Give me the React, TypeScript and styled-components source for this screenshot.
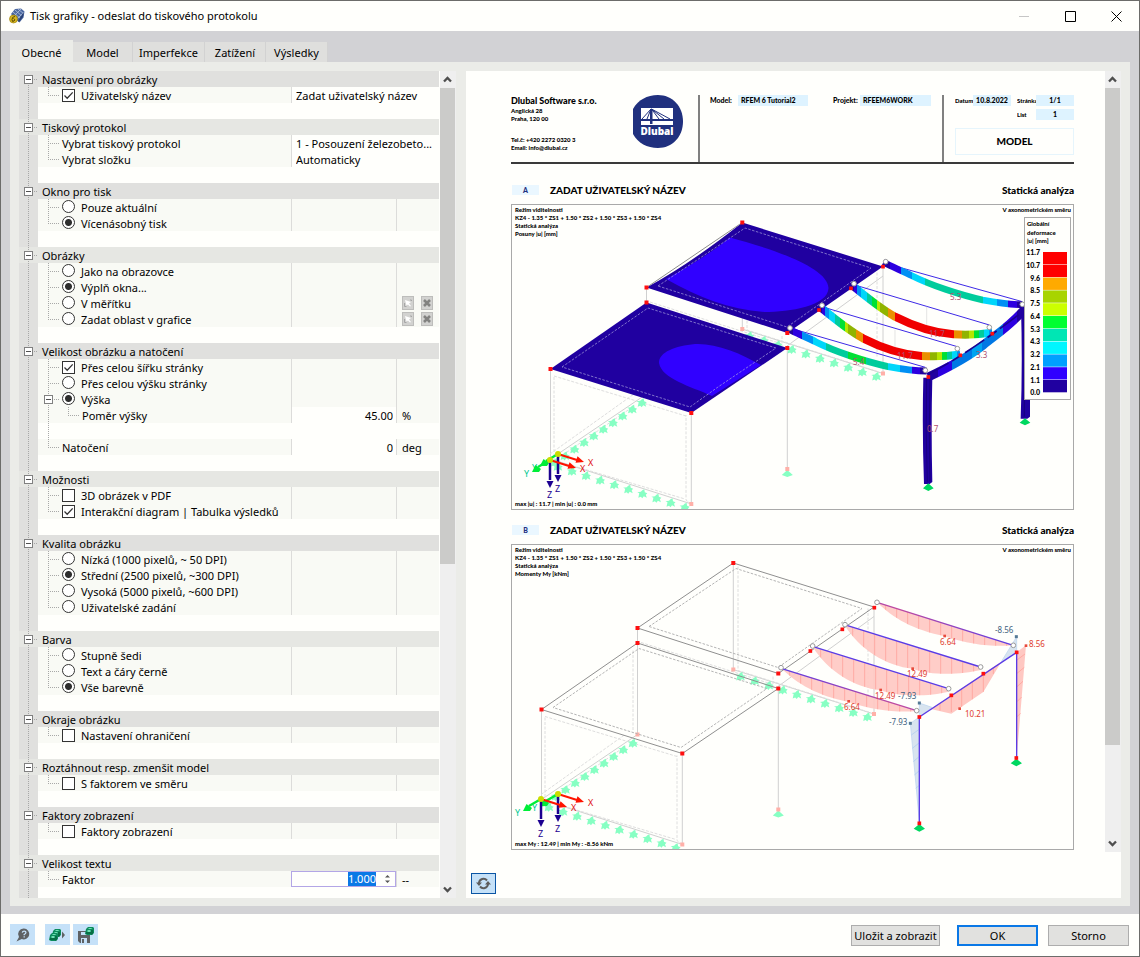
import React, { useEffect, useRef } from "react";
import styled, { createGlobalStyle, css } from "styled-components";

const UI_FONT = '"Noto Sans", "Open Sans", sans-serif';
const PRINT_FONT = '"Lato", "Open Sans", sans-serif';
const PAPER = "#fffffc";

const GlobalStyle = createGlobalStyle`
  *, *::before, *::after { box-sizing: border-box; }
  body { margin: 0; background: ${PAPER}; color: #000; font: 11px/16px ${UI_FONT}; }
  button, input, select { font: inherit; color: inherit; }
`;

/* ---------- window frame ---------- */

const Dialog = styled.div`
  display: flex;
  flex-direction: column;
  height: 100vh;
  border: 1px solid #6c6c6a;
  background: ${PAPER};
`;

const TitleBar = styled.header`
  display: flex;
  align-items: center;
  gap: 5px;
  flex: 0 0 30px;
  padding-left: 8px;
  h1 { flex: 1; margin: 0; font-size: 11px; font-weight: 400; line-height: 16px; }
`;

const CaptionButtons = styled.div`
  display: flex;
`;

const CaptionButton = styled.button`
  display: grid;
  place-items: center;
  width: 46px;
  height: 30px;
  padding: 0;
  border: 0;
  background: none;
`;

const Body = styled.main`
  display: flex;
  flex-direction: column;
  flex: 1;
  min-height: 0;
  padding: 9px 9px 8px;
  background: #d2d2d5;
`;

const Tabs = styled.nav`
  display: flex;
  align-items: flex-end;
  height: 22px;
`;

const Tab = styled.button<{ $width: number; $active?: boolean }>`
  width: ${(p) => p.$width}px;
  height: ${(p) => (p.$active ? 22 : 20)}px;
  padding: ${(p) => (p.$active ? 4 : 2)}px 0 0;
  border: 0;
  border-right: ${(p) => (p.$active ? "0" : "1px solid #d2d2d2")};
  background: ${(p) => (p.$active ? "#ebece8" : "#dfdfdd")};
  line-height: 18px;
  white-space: nowrap;
`;

const TabPage = styled.section`
  display: flex;
  gap: 10px;
  flex: 1;
  min-height: 0;
  padding: 9px 9px 8px;
  background: #ebece8;
`;

const Footer = styled.footer`
  display: flex;
  align-items: flex-start;
  flex: 0 0 42px;
  padding: 10px 10px 0 9px;
`;

const ToolButton = styled.button<{ $outlined?: boolean; $spaced?: boolean }>`
  display: grid;
  place-items: center;
  width: 25px;
  height: 21px;
  margin-right: ${(p) => (p.$spaced ? 10 : 3)}px;
  padding: 0;
  border: ${(p) => (p.$outlined ? "1px solid #0a55a4" : "0")};
  background: #c5e1f8;
`;

const PushButtons = styled.div`
  display: flex;
  gap: 10px;
  margin: 1px 0 0 auto;
`;

const PushButton = styled.button<{ $primary?: boolean; $wide?: boolean }>`
  width: ${(p) => (p.$wide ? 89 : 81)}px;
  height: 21px;
  margin-right: ${(p) => (p.$wide ? 7 : 0)}px;
  padding: 0;
  border: ${(p) => (p.$primary ? "2px solid #0a78e6" : "1px solid #adadad")};
  background: #e1e1df;
  line-height: 17px;
  white-space: nowrap;
`;

/* ---------- scroll bar ---------- */

const ScrollTrack = styled.div`
  display: flex;
  flex-direction: column;
  flex: 0 0 16px;
  background: #efefef;
`;

const ScrollArrow = styled.button`
  display: grid;
  place-items: center;
  flex: 0 0 17px;
  width: 15px;
  padding: 0;
  border: 0;
  background: none;
`;

const ScrollLane = styled.div`
  flex: 1;
  min-height: 0;
`;

const ScrollThumb = styled.div<{ $share: number }>`
  width: 15px;
  height: ${(p) => p.$share}%;
  background: #cbcbc9;
`;

function ScrollBar({ share }: { share: number }) {
  return (
    <ScrollTrack>
      <ScrollArrow aria-label="Nahoru">
        <svg width="9" height="7" viewBox="0 0 9 7"><path d="M1 5.500 4.500 2 8 5.500" fill="none" stroke="#4e4e4e" strokeWidth="2.300" /></svg>
      </ScrollArrow>
      <ScrollLane><ScrollThumb $share={share} /></ScrollLane>
      <ScrollArrow aria-label="Dolů">
        <svg width="9" height="7" viewBox="0 0 9 7"><path d="M1 1.500 4.500 5 8 1.500" fill="none" stroke="#4e4e4e" strokeWidth="2.300" /></svg>
      </ScrollArrow>
    </ScrollTrack>
  );
}

/* ---------- property tree ---------- */

const dotsX = "repeating-linear-gradient(to right, #a8a8a8 0 1px, transparent 1px 2px)";
const dotsY = "repeating-linear-gradient(to bottom, #a8a8a8 0 1px, transparent 1px 2px)";

const TreePanel = styled.div`
  display: flex;
  gap: 1px;
  flex: 0 0 437px;
  background: ${PAPER};
`;

const TreeList = styled.div`
  flex: 1;
  overflow: hidden;
`;

const Row = styled.div`
  display: flex;
  height: 16px;
  white-space: nowrap;
`;

const Gutter = styled.div<{ $start?: boolean }>`
  flex: 0 0 19px;
  padding: 4px 0 0 5px;
  background: ${dotsY} 9px ${(p) => (p.$start ? "12px" : "0")} / 1px 16px no-repeat, #e0e0de;
`;

const GroupRow = styled(Row)<{ $light: boolean }>`
  background: ${(p) => (p.$light ? "#e6e7e3" : "#e0e0de")};
  ${Gutter} {
    background:
      ${dotsY} 9px 0 / 1px 16px no-repeat,
      ${dotsX} 15px 8px / 4px 1px no-repeat;
  }
  &:first-child ${Gutter} {
    background:
      ${dotsY} 9px 12px / 1px 16px no-repeat,
      ${dotsX} 15px 8px / 4px 1px no-repeat;
  }
  h2 {
    margin: 0;
    padding-left: 4px;
    font: inherit;
    line-height: 18px;
  }
`;

const Expander = styled.button`
  display: block;
  width: 9px;
  height: 9px;
  padding: 0;
  border: 1px solid #808080;
  background: linear-gradient(#505050, #505050) 1px 3px / 5px 1px no-repeat, #fff;
`;

const LabelCell = styled.div`
  display: flex;
  flex: 1;
  background: #f9faf5;
`;

const Branch = styled.span<{ $last?: boolean; $nested?: boolean }>`
  flex: 0 0 24px;
  padding: 4px 0 0 6px;
  background:
    ${dotsX} 10px 8px / 11px 1px no-repeat,
    ${dotsY} 10px 0 / 1px ${(p) => (p.$last ? 8 : 16)}px no-repeat;
`;

const Trunk = styled.span`
  flex: 0 0 20px;
  background: ${dotsY} 10px 0 / 1px 16px no-repeat;
`;

const Caption = styled.span`
  line-height: 18px;
`;

const ChoiceLabel = styled.label`
  display: flex;
  align-items: flex-start;
  gap: 6px;
  line-height: 18px;
`;

const markBase = css`
  appearance: none;
  flex: none;
  width: 13px;
  height: 13px;
  border: 1px solid #333;
  background: #fff;
`;

const Tick = styled.input.attrs({ type: "checkbox" })`
  ${markBase}
  margin: 2px 0 0;
  &:checked {
    background-image: url("data:image/svg+xml,%3Csvg xmlns='http://www.w3.org/2000/svg' viewBox='0 0 11 11'%3E%3Cpath d='M1.5 5.5 4.2 8.2 9.7 2.4' fill='none' stroke='%23333' stroke-width='1.3'/%3E%3C/svg%3E");
  }
`;

const Radio = styled.input.attrs({ type: "radio" })`
  ${markBase}
  margin: 1px 0 0;
  border-radius: 50%;
  &:checked { background-image: radial-gradient(circle, #2e2e2e 3px, transparent 4px); }
`;

const ValueCell = styled.div<{ $wide?: boolean; $white?: boolean }>`
  flex: 0 0 ${(p) => (p.$wide ? 148 : 105)}px;
  border-left: 1px solid #dcdcda;
  background: ${(p) => (p.$white ? PAPER : "#f9faf5")};
`;

const UnitCell = styled.div`
  display: flex;
  gap: 7px;
  flex: 0 0 43px;
  padding-left: 5px;
  border-left: 1px solid #dcdcda;
  background: #f9faf5;
  line-height: 18px;
`;

const Field = styled.input<{ $number?: boolean }>`
  display: block;
  width: 100%;
  height: 16px;
  padding: ${(p) => (p.$number ? "2px 3px 0 0" : "2px 0 0 4px")};
  border: 0;
  background: none;
  text-align: ${(p) => (p.$number ? "right" : "left")};
`;

const Picker = styled.select`
  display: block;
  appearance: none;
  width: 100%;
  height: 16px;
  padding: 1px 0 0 4px;
  border: 0;
  background: none;
`;

const SpinCell = styled.div`
  display: flex;
  flex: 0 0 105px;
  min-width: 0;
  height: 16px;
  border: 1px solid #b3a6e6;
  background: ${PAPER};
  input {
    flex: 1;
    width: 0;
    height: 14px;
    padding: 0 4px 0 0;
    border: 0;
    outline: 0;
    background: none;
    line-height: 14px;
    text-align: right;
  }
  input::selection { background: #0a78e6; color: #fff; }
`;

const SpinButton = styled.button`
  display: grid;
  place-items: center;
  width: 15px;
  padding: 0;
  border: 0;
  background: none;
`;

const MiniButton = styled.button`
  display: grid;
  place-items: center;
  width: 12px;
  height: 14px;
  margin-top: 1px;
  padding: 0;
  border: 1px solid #bdbdbb;
  background: #d2d2d0;
`;

type Item = {
  text?: string;
  kind?: "check" | "radio" | "plain" | "blank";
  on?: boolean;
  value?: string;
  unit?: string;
  control?: "text" | "select" | "number" | "spin";
  tools?: boolean;
  expandable?: boolean;
  nested?: boolean;
  trunk?: boolean;
};

const blank: Item = { kind: "blank" };

const groups: { title: string; items: Item[] }[] = [
  { title: "Nastavení pro obrázky", items: [
    { text: "Uživatelský název", kind: "check", on: true, value: "Zadat uživatelský název", control: "text" }, blank] },
  { title: "Tiskový protokol", items: [
    { text: "Vybrat tiskový protokol", kind: "plain", value: "1 - Posouzení železobeto...", control: "select" },
    { text: "Vybrat složku", kind: "plain", value: "Automaticky", control: "select" }, blank] },
  { title: "Okno pro tisk", items: [
    { text: "Pouze aktuální", kind: "radio" }, { text: "Vícenásobný tisk", kind: "radio", on: true }, blank] },
  { title: "Obrázky", items: [
    { text: "Jako na obrazovce", kind: "radio" }, { text: "Výplň okna...", kind: "radio", on: true },
    { text: "V měřítku", kind: "radio", tools: true }, { text: "Zadat oblast v grafice", kind: "radio", tools: true }, blank] },
  { title: "Velikost obrázku a natočení", items: [
    { text: "Přes celou šířku stránky", kind: "check", on: true }, { text: "Přes celou výšku stránky", kind: "radio" },
    { text: "Výška", kind: "radio", on: true, expandable: true },
    { text: "Poměr výšky", kind: "plain", nested: true, value: "45.00", unit: "%", control: "number" },
    { kind: "blank", trunk: true },
    { text: "Natočení", kind: "plain", value: "0", unit: "deg", control: "number" }, blank] },
  { title: "Možnosti", items: [
    { text: "3D obrázek v PDF", kind: "check" }, { text: "Interakční diagram | Tabulka výsledků", kind: "check", on: true }, blank] },
  { title: "Kvalita obrázku", items: [
    { text: "Nízká (1000 pixelů, ~ 50 DPI)", kind: "radio" }, { text: "Střední (2500 pixelů, ~300 DPI)", kind: "radio", on: true },
    { text: "Vysoká (5000 pixelů, ~600 DPI)", kind: "radio" }, { text: "Uživatelské zadání", kind: "radio" }, blank] },
  { title: "Barva", items: [
    { text: "Stupně šedi", kind: "radio" }, { text: "Text a čáry černě", kind: "radio" }, { text: "Vše barevně", kind: "radio", on: true }, blank] },
  { title: "Okraje obrázku", items: [{ text: "Nastavení ohraničení", kind: "check" }, blank] },
  { title: "Roztáhnout resp. zmenšit model", items: [{ text: "S faktorem ve směru", kind: "check" }, blank] },
  { title: "Faktory zobrazení", items: [{ text: "Faktory zobrazení", kind: "check" }, blank] },
  { title: "Velikost textu", items: [{ text: "Faktor", kind: "plain", value: "1.000", unit: "--", control: "spin" }, blank] },
];

function SpinField({ label, value }: { label: string; value: string }) {
  const ref = useRef<HTMLInputElement>(null);
  useEffect(() => {
    ref.current?.focus({ preventScroll: true });
    ref.current?.select();
  }, []);
  return (
    <SpinCell>
      <input ref={ref} aria-label={label} defaultValue={value} />
      <SpinButton aria-label="Změnit hodnotu">
        <svg width="7" height="10" viewBox="0 0 7 10"><path d="M1 3.500h5L3.500 1zM1 6.500h5L3.500 9z" fill="#555" /></svg>
      </SpinButton>
    </SpinCell>
  );
}

function Value({ item }: { item: Item }) {
  const { control, text = "", value = "" } = item;
  if (control === "text") return <ValueCell $wide $white><Field aria-label={text} defaultValue={value} /></ValueCell>;
  if (control === "select")
    return <ValueCell $wide $white><Picker aria-label={text}><option>{value}</option></Picker></ValueCell>;
  return (
    <>
      {control === "spin" ? <SpinField label={text} value={value} />
        : <ValueCell $white={!!control}>{control && <Field $number aria-label={text} defaultValue={value} />}</ValueCell>}
      <UnitCell>
        {item.unit}
        {item.tools && (
          <>
            <MiniButton disabled aria-label="Vybrat v grafice">
              <svg width="10" height="10" viewBox="0 0 10 10"><path d="M2 2 8 4 6 5.500 8 8 7 8.500 5 6.500 3.500 7.500z" fill="#fff" /><path d="M1.500 5v3.500h2M7 2h1.500v1" fill="none" stroke="#a6a6a6" /></svg>
            </MiniButton>
            <MiniButton disabled aria-label="Odstranit">
              <svg width="8" height="8" viewBox="0 0 8 8"><path d="m1 1 6 6M7 1 1 7" stroke="#828280" strokeWidth="2.600" /></svg>
            </MiniButton>
          </>
        )}
      </UnitCell>
    </>
  );
}

function TreeItem({ item, group, last }: { item: Item; group: string; last: boolean }) {
  if (item.kind === "blank") return <Row><Gutter />{item.trunk && <Trunk />}</Row>;
  return (
    <Row>
      <Gutter />
      <LabelCell>
        {item.nested && <Trunk />}
        <Branch $last={last || item.nested}>{item.expandable && <Expander aria-label={"Sbalit " + item.text} />}</Branch>
        {item.kind === "plain" ? <Caption>{item.text}</Caption> : (
          <ChoiceLabel>
            {item.kind === "check" ? <Tick defaultChecked={item.on} /> : <Radio name={group} defaultChecked={item.on} />}
            {item.text}
          </ChoiceLabel>
        )}
      </LabelCell>
      <Value item={item} />
    </Row>
  );
}

/* ---------- print preview ---------- */

const PreviewPanel = styled.div`
  display: flex;
  flex-direction: column;
  flex: 1;
  min-width: 0;
  background: ${PAPER};
`;

const PreviewScroll = styled.div`
  display: flex;
  flex: 1;
  min-height: 0;
`;

const Sheet = styled.article`
  flex: 1;
  min-width: 0;
  overflow: hidden;
  padding: 24px 31px 0 45px;
  font: 900 6px/8px ${PRINT_FONT};
`;

const PreviewTools = styled.div`
  flex: 0 0 46px;
  padding: 21px 5px 0;
`;

const SheetHead = styled.header`
  display: grid;
  grid-template: 67px / 187px 1fr 132px;
  height: 69px;
  margin-bottom: 19px;
  border-bottom: 2px solid #3a3a3a;
`;

const Company = styled.address`
  display: flex;
  justify-content: space-between;
  padding-right: 14px;
  font-style: normal;
  strong { display: block; font-size: 9px; font-weight: 900; line-height: 12px; }
  p { margin: 0 0 13px; }
  p:last-child { margin: 0; }
`;

const HeadPairs = styled.dl`
  display: grid;
  grid-template-columns: 28px 70px 25px 27px 71px;
  align-content: start;
  margin: 0;
  padding-left: 10px;
  border-left: 2px solid #808080;
  font-size: 7px;
  line-height: 11px;
  dd { margin: 0; padding-left: 3px; background: #def3ff; white-space: nowrap; }
  dd + dt { grid-column: 4; }
`;

const HeadDates = styled.div`
  padding-left: 11px;
  border-left: 2px solid #808080;
  line-height: 11px;
  dl {
    display: grid;
    grid-template-columns: 18px 38px 6px 19px 38px;
    row-gap: 3px;
    margin: 0 0 8px;
  }
  dt { overflow: hidden; white-space: nowrap; }
  dd { margin: 0; background: #def3ff; font-size: 7px; text-align: center; }
  .second { grid-column: 4; }
  p { margin: 0; border: 1px solid #e6f5fc; font-size: 10px; line-height: 25px; text-align: center; }
`;

const FigureHead = styled.div`
  display: flex;
  align-items: center;
  gap: 11px;
  height: 14px;
  margin-bottom: 7px;
  font-size: 10px;
  line-height: 14px;
  h3 { flex: 1; margin: 0; font: inherit; }
`;

const Mark = styled.span`
  width: 27px;
  height: 10px;
  margin-left: 1px;
  background: #eaf7ff;
  color: #1f2f80;
  font-size: 7px;
  line-height: 10px;
  text-align: center;
`;

const Figure = styled.figure`
  position: relative;
  margin: 0 0 13px;
  border: 1px solid #a9a9a9;
  svg { display: block; width: 100%; height: auto; }
`;

const Note = styled.div<{ $corner: "topLeft" | "topRight" | "bottomLeft" }>`
  position: absolute;
  white-space: nowrap;
  ${(p) => (p.$corner === "bottomLeft" ? "bottom: 1px;" : "top: 1px;")}
  ${(p) => (p.$corner === "topRight" ? "right: 2px;" : "left: 3px;")}
  p { margin: 0; height: 8px; }
  small { font-size: 5px; }
`;

function DlubalLogo() {
  return (
    <svg width="52" height="54" viewBox="0 0 52 54" role="img" aria-label="Dlubal">
      <path d="M1 14C6 5 15 0 26 0c14 0 25 11 25 26.500S40 53 26 53C15 53 6 48 1 39z" fill="#20307e" />
      <path d="M9 13h32v17H9z" fill="#fff" />
      <path d="M9 24h32v2H9zM18 14h2.500v15H18z" fill="#20307e" />
      <path d="M19 14 10 24M19 14l-4 10M19.500 14 27 24M19.500 14 32 24M19.500 14 38 24" stroke="#20307e" strokeWidth="1" fill="none" />
      <text x="25" y="40" fill="#fff" fontFamily="Open Sans, sans-serif" fontSize="10" fontWeight="800" textAnchor="middle">Dlubal</text>
    </svg>
  );
}

const star = "M0-3.500 2-4.500 2.500-1.500 5-.5 3.500 1 4.500 4 1.500 2.500 0 4.500-1.500 3-4 4-3-.5-5-1.500-1.500-2z";

function Stars({ x, y, dx, dy, n }: { x: number; y: number; dx: number; dy: number; n: number }) {
  return <>{Array.from({ length: n }, (_, i) => <path key={i} d={star} transform={`translate(${x + dx * i} ${y + dy * i})`} fill="#87ffc3" />)}</>;
}

function Nodes({ at, size = 4, fill = "#ff0f0f" }: { at: number[][]; size?: number; fill?: string }) {
  return <>{at.map(([x, y]) => <rect key={x + "," + y} x={x - size / 2} y={y - size / 2} width={size} height={size} fill={fill} />)}</>;
}

function Hinges({ at }: { at: number[][] }) {
  return <>{at.map(([x, y]) => <circle key={x + "," + y} cx={x} cy={y} r="7" fill="#fff" stroke="#9a9a9a" strokeWidth="3" />)}</>;
}

const Outline = () => (
  <g fill="none">
    <path d="M550.500 369v90M691.300 413v91M787.300 348v121M646.500 287v107M742.300 222v107M883 266v107M550.500 459l96-65M550.500 459l141 45M742 329l141 44.500M787 346l96-70" stroke="#d0d0d0" />
    <path d="M554 377v84l80-55M691 504l-5-4v-85M554 376l132 40M560 462l125 37M650 302l132 42M747 226v104l132 42M877 268v90M550 454l84-60M642 310v80M782 336v14" stroke="#dedede" strokeDasharray="3 1.500" />
  </g>
);

const Supports = () => (
  <g>
    <Stars x={641.7} y={402.7} dx={-9.63} dy={6.65} n={10} />
    <Stars x={557.7} y={466.7} dx={14.1} dy={4.5} n={10} />
    <Stars x={749.3} y={336} dx={14.1} dy={4.5} n={10} />
    <path d="m787.300 470 5.500 5-5.500 2-5.500-2z" fill="#87ffc3" />
    <Nodes at={[[742.3, 329], [883, 373.5], [691.3, 504], [787.3, 469], [646.5, 394]]} fill="#ffb0a8" />
  </g>
);

const topNodes = [[742.3, 222.5], [646.5, 287.5], [646.5, 302.5], [550.5, 369], [691.3, 413], [787.3, 348], [787.3, 333]];

const DrawingText = styled.text`
  font: 400 8px ${UI_FONT};
`;

const AxisLabel = styled.text`
  font: 400 9px ${UI_FONT};
`;

function Axes({ x, y }: { x: number; y: number }) {
  return (
    <g>
      <path d={`M${x} ${y}l19 6`} stroke="#ff1400" strokeWidth="2" />
      <path d={`M${x + 26} ${y + 8}l-8.500.8 2-6.500z`} fill="#ff1400" />
      <path d={`M${x} ${y}v20`} stroke="#1c0090" strokeWidth="2.500" />
      <path d={`M${x} ${y + 28}l-3.500-7h7z`} fill="#1c0090" />
      <path d={`M${x} ${y}l-12 7`} stroke="#00ee38" strokeWidth="2.500" />
      <path d={`M${x - 18} ${y + 12}l3.500-7 5.500 4-2 3z`} fill="#00ee38" />
      <circle cx={x} cy={y} r="3" fill="#ccdc00" />
      <AxisLabel x={x + 30} y={y + 12} fill="#e01010">X</AxisLabel>
      <AxisLabel x={x - 26} y={y + 17} fill="#00c890">Y</AxisLabel>
      <AxisLabel x={x - 3} y={y + 38} fill="#1c0090">Z</AxisLabel>
    </g>
  );
}

const N = "#2000a0", B = "#2c00e0", S = "#0090f4", C = "#00d6fa", T = "#00cc9c", G = "#00e034", Y = "#b6e600", O = "#90b400", A = "#ea9000", R = "#f00000";

/* Colour bands of a bar: each entry is the x where the colour starts. */
const bands: Record<string, [number, string][]> = {
  edgeBack: [[310, N], [330, B], [363, S], [395, C], [436, T], [608, C], [650, S], [683, B], [710, N], [740, N]],
  edgeFront: [[20, N], [38, B], [67, S], [98, C], [138, T], [204, G], [258, T], [323, C], [361, S], [395, B], [420, N], [450, N]],
  innerBack: [[215, N], [222, B], [230, S], [243, C], [262, T], [275, G], [290, Y], [300, O], [325, A], [345, R], [522, A], [547, O], [567, Y], [583, G], [597, T], [612, C], [628, S], [645, S]],
  innerFront: [[119, N], [126, B], [134, S], [147, C], [166, T], [179, G], [194, Y], [204, O], [229, A], [249, R], [426, A], [451, O], [471, Y], [487, G], [501, T], [516, C], [532, S], [549, S]],
  cross: [[440, N], [475, B], [515, "#0078e4"], [575, "#00a4f0"], [605, "#0078e4"], [668, B], [710, N], [745, N]],
};

function Bands() {
  return (
    <defs>
      {Object.entries(bands).map(([id, list]) => {
        const x1 = list[0][0];
        const x2 = list[list.length - 1][0];
        const at = (x: number) => (x - x1) / (x2 - x1);
        return (
          <linearGradient key={id} id={id} gradientUnits="userSpaceOnUse" x1={x1} x2={x2} y1="0" y2="0">
            {list.slice(0, -1).flatMap(([x, c], i) => [
              <stop key={x + "a"} offset={at(x)} stopColor={c} />,
              <stop key={x + "b"} offset={at(list[i + 1][0])} stopColor={c} />,
            ])}
          </linearGradient>
        );
      })}
    </defs>
  );
}

const LegendText = styled.text`
  font: 900 7px ${PRINT_FONT};
`;

const LegendCaption = styled.text`
  font: 900 6px ${PRINT_FONT};
`;

const legendColours = ["#ff0000", "#ff0000", "#ffaa00", "#a8d400", "#ccff00", "#00ff30", "#00e6b4", "#00f6ff", "#00a0ff", "#3000ff", "#2000a0"];
const legendValues = ["11.7", "10.7", "9.6", "8.5", "7.5", "6.4", "5.3", "4.3", "3.2", "2.1", "1.1", "0.0"];

function DeformationDrawing() {
  return (
    <svg viewBox="512 205 561 304" role="img" aria-label="Globální deformace">
      <Bands />
      <Outline />
      <Supports />
      <path d="M742.300 222.500 883 266.500 787.300 333 646.500 287.500Q690 264 742.300 222.500z" fill={N} />
      <path d="M666 279C690 266 715 250 730 237.500 765 247 828 266 828.500 288 828 306 790 312 764 312 728 309 700 298 666 279z" fill="#3000ff" />
      <path d="M646.500 302.500 787.300 348 691.300 413 550.500 369z" fill={N} />
      <path d="M761 365C740 353 716 343 695 344 675 346 659 352 659 363 662 379 690 386 712 396z" fill="#3000ff" />
      <path d="M646.500 287.500 742.300 222.500" stroke="#8c8c8c" fill="none" />
      <path d="M658 286 745 228 871 268 787 327zM562 367 648 308 776 348 718 387 690 407z" fill="none" stroke="#a8a2dc" strokeDasharray="2.500 1.500" strokeWidth=".7" />
      <g transform="translate(780 210) scale(.33333)" fill="none">
        <path d="M316 160 727 275M221 224 628 345M125 290 532 410M29 354 436 472" stroke="#3c28e6" strokeWidth="3" />
        <path d="M440 290v75M345 360v60" stroke="#d8d8d8" strokeWidth="2" />
        <path d="M310 157C340 172 372 185 395 197 450 225 540 255 608 270 650 278 690 284 727 284" stroke="url(#edgeBack)" strokeWidth="20" />
        <path d="M219 228C260 262 300 295 345 320 400 348 455 368 520 373 570 376 605 373 637 368" stroke="url(#innerBack)" strokeWidth="24" />
        <path d="M123 293C164 327 204 360 249 385 304 413 359 433 424 438 474 441 509 438 541 433" stroke="url(#innerFront)" strokeWidth="24" />
        <path d="M23 356C53 371 85 384 108 396 163 424 253 454 321 469 363 477 403 483 440 483" stroke="url(#edgeFront)" strokeWidth="21" />
        <path d="M445 501C500 475 560 445 610 405 650 372 700 340 738 292" stroke="url(#cross)" strokeWidth="26" />
        <path d="M445 493C510 458 580 418 735 300" stroke="#1c0090" strokeWidth="5" strokeDasharray="70 12 34 12" />
        <path d="M430 503h27q-4 150 0 313l-8 6h-17q-6-160-2-319zM723 290h27v330l-8 6h-20q6-160 1-336z" fill={N} />
        <path d="M440 505q-4 150 2 310M450 505q-4 150 0 310M733 300v320" stroke="#140070" strokeWidth="2" />
        <path d="m445 820 16 15-16 8-16-8zM735 625l16 13-16 8-16-8z" fill="#00d860" />
        <Nodes size={11} at={[[309, 170], [213, 235], [117, 300], [637, 371], [541, 436], [445, 501]]} />
        <Hinges at={[[317, 155], [222, 221], [126, 286], [30, 354], [727, 283], [628, 352], [532, 416], [436, 481]]} />
      </g>
      <Nodes at={topNodes} />
      <g fill="#b0506e">
        <DrawingText x="950" y="300">5.3</DrawingText>
        <DrawingText x="929" y="337">11.7</DrawingText>
        <DrawingText x="897" y="359">11.7</DrawingText>
        <DrawingText x="853" y="365">5.4</DrawingText>
        <DrawingText x="976" y="358">3.3</DrawingText>
        <DrawingText x="927" y="432">0.7</DrawingText>
      </g>
      <Axes x={558} y={454} />
      <Axes x={550} y={460} />
      <rect x="1024.500" y="217.500" width="46" height="182" fill={PAPER} stroke="#a9a9a9" />
      <LegendCaption x="1027" y="226">Globální</LegendCaption>
      <LegendCaption x="1027" y="235">deformace</LegendCaption>
      <LegendCaption x="1027" y="243">|u| [mm]</LegendCaption>
      {legendColours.map((c, i) => <rect key={i} x="1043" y={252 + i * 12.8} width="24" height="12.300" fill={c} />)}
      {legendValues.map((v, i) => <LegendText key={v} x="1040" y={255 + i * 12.75} textAnchor="end">{v}</LegendText>)}
    </svg>
  );
}

function MomentDrawing() {
  const rose = "#ffc8c2";
  const outer = "M291 247C340 295 400 330 492 348 570 375 640 381 700 376z";
  const inner = "M193 314C240 390 320 438 398 446 450 467 545 464 602 450L602 441z";
  return (
    <svg viewBox="512 545 561 304" role="img" aria-label="Momenty My">
      <defs>
        <pattern id="ribs" width="33" height="40" patternUnits="userSpaceOnUse">
          <path d="M20 0v40" stroke="#ff9a92" strokeWidth="2" />
        </pattern>
        <linearGradient id="chord"><stop stopColor="#5a3ce6" /><stop offset=".5" stopColor="#c04aa0" /><stop offset="1" stopColor="#5a3ce6" /></linearGradient>
      </defs>
      <g transform="translate(-9 340.500)">
        <Outline />
        <Supports />
        <path d="M742.300 222.500 883 266.500 787.300 333 646.500 287.500zM646.500 302.500 787.300 348 691.300 413 550.500 369z" fill="none" stroke="#8f8f8f" />
        <path d="M658 286 745 228 871 268 787 327zM562 367 648 308 776 348 690 407z" fill="none" stroke="#b4b4b4" strokeDasharray="2.500 1.500" />
        <Nodes at={topNodes} />
      </g>
      <g transform="translate(780 520) scale(.33333)" fill="none">
        {[[outer, 0, 0], [inner, 0, 0], [inner, -96, 65], [outer, -288, 197]].map(([d, x, y], i) => (
          <g key={i} transform={`translate(${x} ${y})`}>
            <path d={d as string} fill={rose} fillOpacity=".9" />
            <path d={d as string} fill="url(#ribs)" />
          </g>
        ))}
        <path d="M452 567 514 581 610 516 664 425zM738 376 710 397V715z" fill={rose} />
        <path d="M545 508v53M577 485v53M610 462v54M640 442v20M514 526v50M480 550v22" stroke="#ff9a92" strokeWidth="2" />
        <path d="m711 420 24-18M711 460l22-18M711 500l18-16M711 545l14-14M711 590l11-10" stroke="#ff9a92" strokeWidth="2" />
        <path d="M418 549V591L456 562zM664 425 710 350V397zM391 610 418 591V905z" fill="#d8e4ef" stroke="#b8d2f0" strokeWidth="2" />
        <path d="m394 645 22-16M397 685l20-16M400 725l16-14M403 765l14-12M407 805l10-8" stroke="#a8c8f0" strokeWidth="2" />
        <path d="M291 247 700 376M3 445 410 572" stroke="url(#chord)" strokeWidth="4" />
        <path d="M193 314 602 441M97 379 506 506" stroke="#5a3ce6" strokeWidth="4" />
        <path d="M418 591 710 397M418 591V910M710 397V715" stroke="#5a3ce6" strokeWidth="4" />
        <path d="m418 912 17 14-17 9-17-9zM709 716l17 14-17 9-17-9z" fill="#00d860" />
        <Nodes size={11} at={[[283, 263], [187, 328], [91, 393], [610, 461], [514, 526], [418, 591], [710, 397], [418, 910], [709, 714]]} />
        <Nodes size={8} fill="#e84a3c" at={[[494, 348], [398, 446], [302, 510], [206, 544], [539, 566], [738, 377]]} />
        <Nodes size={9} fill="#557a96" at={[[418, 549], [391, 610], [709, 350]]} />
        <Hinges at={[[291, 247], [195, 314], [98, 378], [3, 443], [700, 376], [602, 441], [506, 506], [410, 572]]} />
      </g>
      <g fill="#e03c2d">
        <DrawingText x="940" y="645">6.64</DrawingText>
        <DrawingText x="907" y="677">12.49</DrawingText>
        <DrawingText x="875" y="699">12.49</DrawingText>
        <DrawingText x="844" y="710">6.64</DrawingText>
        <DrawingText x="1029" y="647">8.56</DrawingText>
        <DrawingText x="965" y="717">10.21</DrawingText>
      </g>
      <g fill="#3f627e">
        <DrawingText x="898" y="699">-7.93</DrawingText>
        <DrawingText x="889" y="725">-7.93</DrawingText>
        <DrawingText x="995" y="633">-8.56</DrawingText>
      </g>
      <Axes x={558} y={794} />
      <Axes x={541} y={799} />
    </svg>
  );
}

function Conditions({ children }: { children: React.ReactNode }) {
  return (
    <Note $corner="topLeft">
      <p>Režim viditelnosti</p>
      <p>KZ4 - 1.35 * ZS1 + 1.50 * ZS2 + 1.50 * ZS3 + 1.50 * ZS4</p>
      <p>Statická analýza</p>
      <p>{children}</p>
    </Note>
  );
}

function Preview() {
  return (
    <Sheet>
      <SheetHead>
        <Company>
          <div>
            <strong>Dlubal Software s.r.o.</strong>
            <p>Anglická 28<br />Praha, 120 00</p>
            <p>Tel.č: +420 2272 0320 3<br />Email: info@dlubal.cz</p>
          </div>
          <DlubalLogo />
        </Company>
        <HeadPairs>
          <dt>Model:</dt><dd>RFEM 6 Tutorial2</dd>
          <dt>Projekt:</dt><dd>RFEEM6WORK</dd>
        </HeadPairs>
        <HeadDates>
          <dl>
            <dt>Datum</dt><dd>10.8.2022</dd>
            <dt className="second">Stránka</dt><dd>1/1</dd>
            <dt className="second">List</dt><dd>1</dd>
          </dl>
          <p>MODEL</p>
        </HeadDates>
      </SheetHead>
      <FigureHead><Mark>A</Mark><h3>ZADAT UŽIVATELSKÝ NÁZEV</h3><span>Statická analýza</span></FigureHead>
      <Figure>
        <DeformationDrawing />
        <Conditions>Posuny |u| [mm]</Conditions>
        <Note $corner="topRight">V axonometrickém směru</Note>
        <Note $corner="bottomLeft">max |u| : 11.7 | min |u| : 0.0 mm</Note>
      </Figure>
      <FigureHead><Mark>B</Mark><h3>ZADAT UŽIVATELSKÝ NÁZEV</h3><span>Statická analýza</span></FigureHead>
      <Figure>
        <MomentDrawing />
        <Conditions>Momenty M<small>y</small> [kNm]</Conditions>
        <Note $corner="topRight">V axonometrickém směru</Note>
        <Note $corner="bottomLeft">max M<small>y</small> : 12.49 | min M<small>y</small> : -8.56 kNm</Note>
      </Figure>
    </Sheet>
  );
}

const AppIcon = () => (
  <svg width="16" height="16" viewBox="0 0 16 16" aria-hidden="true">
    <path d="M2 6 6 1l6-.5 3.500 3-1 6-4 5L6 11z" fill="#4c68a0" />
    <path d="m4 4 8 7M6 2l8 7M9 1l6 5M5 8l7-7M8 11l7-7" stroke="#b4c4e0" strokeWidth=".8" />
    <path d="m10 14 4-5 1-5-1 1-5 8z" fill="#2b4274" />
    <circle cx="4.500" cy="11" r="4" fill="#d8b822" stroke="#927600" strokeWidth=".6" />
    <path d="M6 8.500q-3 0-3 3t2 1.500-.5-2.500" fill="none" stroke="#5a4700" />
  </svg>
);

const GreenBlock = ({ x, y }: { x: number; y: number }) => (
  <g transform={`translate(${x} ${y})`}>
    <path d="M1 2 3 0h5l1 1v5L7 8H2L0 7z" fill="#0c8c5c" />
    <path d="M2.500 3h3v2h-3zM4 1h3.500L6 2H3z" fill="#6fe0b4" />
    <path d="M7 3v4.500M1 6h5" stroke="#03502f" fill="none" />
  </g>
);

export default function App() {
  return (
    <Dialog>
      <GlobalStyle />
      <TitleBar>
        <AppIcon />
        <h1>Tisk grafiky - odeslat do tiskového protokolu</h1>
        <CaptionButtons>
          <CaptionButton aria-label="Minimalizovat" disabled><svg width="10" height="10"><path d="M0 5.500h10" stroke="#c6c6c6" /></svg></CaptionButton>
          <CaptionButton aria-label="Maximalizovat"><svg width="11" height="11"><path d="M.5.5h10v10H.5z" fill="none" stroke="#000" /></svg></CaptionButton>
          <CaptionButton aria-label="Zavřít"><svg width="11" height="11"><path d="m.5.5 10 10m0-10-10 10" stroke="#000" /></svg></CaptionButton>
        </CaptionButtons>
      </TitleBar>
      <Body>
        <Tabs>
          <Tab $width={63} $active>Obecné</Tab>
          <Tab $width={60}>Model</Tab>
          <Tab $width={72}>Imperfekce</Tab>
          <Tab $width={61}>Zatížení</Tab>
          <Tab $width={62}>Výsledky</Tab>
        </Tabs>
        <TabPage>
          <TreePanel>
            <TreeList>
              {groups.map((g, i) => (
                <React.Fragment key={g.title}>
                  <GroupRow $light={i % 2 === 1}>
                    <Gutter><Expander aria-label={"Sbalit " + g.title} /></Gutter>
                    <h2>{g.title}</h2>
                  </GroupRow>
                  {g.items.map((item, k) => <TreeItem key={k} item={item} group={g.title} last={k === g.items.length - 2} />)}
                </React.Fragment>
              ))}
            </TreeList>
            <ScrollBar share={60} />
          </TreePanel>
          <PreviewPanel>
            <PreviewScroll>
              <Preview />
              <ScrollBar share={88} />
            </PreviewScroll>
            <PreviewTools>
              <ToolButton $outlined aria-label="Obnovit náhled">
                <svg width="15" height="13" viewBox="0 0 15 13"><path d="M3 6a4.500 4.500 0 0 1 8-2.500M12 7a4.500 4.500 0 0 1-8 2.500" fill="none" stroke="#5d5d5d" strokeWidth="2" /><path d="M0 5.500h6L3 9zM15 7.500H9L12 4z" fill="#5d5d5d" /></svg>
              </ToolButton>
            </PreviewTools>
          </PreviewPanel>
        </TabPage>
      </Body>
      <Footer>
        <ToolButton $spaced aria-label="Nápověda">
          <svg width="16" height="16" viewBox="0 0 16 16"><path d="M9 1.500a5.500 5.500 0 1 1-2.300 10.600L1.500 14.500 4 10A5.500 5.500 0 0 1 9 1.500z" fill="#5f6264" /><path d="M7.300 5.600q.2-1.500 1.900-1.500t1.700 1.500q0 1-1.700 1.900v.8M9.200 9.300v1.300" fill="none" stroke="#c5e1f8" strokeWidth="1.300" /></svg>
        </ToolButton>
        <ToolButton aria-label="Export">
          <svg width="19" height="14" viewBox="0 0 19 14"><GreenBlock x={4} y={1} /><GreenBlock x={1} y={5} /><path d="m14 3.500 3 3.500-3 3.500z" fill="#5f6264" /></svg>
        </ToolButton>
        <ToolButton aria-label="Uložit nastavení">
          <svg width="18" height="18" viewBox="0 0 18 18"><path d="M1 5h12v12H3l-2-2z" fill="#5f6264" /><path d="M4 6h6v3H4zM4 12h6v5H4z" fill="#c5e1f8" /><path d="M5 13h2v4H5z" fill="#5f6264" /><GreenBlock x={8} y={1} /></svg>
        </ToolButton>
        <PushButtons>
          <PushButton $wide>Uložit a zobrazit</PushButton>
          <PushButton $primary>OK</PushButton>
          <PushButton>Storno</PushButton>
        </PushButtons>
      </Footer>
    </Dialog>
  );
}
